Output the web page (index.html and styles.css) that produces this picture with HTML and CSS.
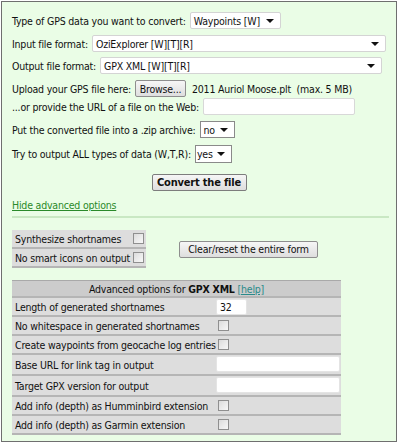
FILE: index.html
```html
<!DOCTYPE html>
<html>
<head>
<meta charset="utf-8">
<link rel="stylesheet" href="styles.css">
</head>
<body>
<div class="panel">
  <div class="row r1">
    <span class="lbl">Type of GPS data you want to convert:</span>
    <span class="sel w-type">Waypoints [W]<i class="arr"></i></span>
  </div>
  <div class="row r2">
    <span class="lbl">Input file format:</span>
    <span class="sel grow in-sel">OziExplorer [W][T][R]<i class="arr"></i></span>
  </div>
  <div class="row r3">
    <span class="lbl">Output file format:</span>
    <span class="sel grow out-sel">GPX XML [W][T][R]<i class="arr"></i></span>
  </div>
  <div class="row r4">
    <span class="lbl">Upload your GPS file here:</span>
    <span class="btn browse">Browse...</span>
    <span class="fname">2011 Auriol Moose.plt&nbsp; (max. 5 MB)</span>
  </div>
  <div class="row r5">
    <span class="lbl">...or provide the URL of a file on the Web:</span>
    <span class="inp url"></span>
  </div>
  <div class="row r6">
    <span class="lbl">Put the converted file into a .zip archive:</span>
    <span class="sel sq w-no">no<i class="arr"></i></span>
  </div>
  <div class="row r7">
    <span class="lbl">Try to output ALL types of data (W,T,R):</span>
    <span class="sel sq w-yes">yes<i class="arr"></i></span>
  </div>
  <div class="row center r8">
    <span class="btn convert">Convert the file</span>
  </div>
  <div class="row r9">
    <a class="link" href="#">Hide advanced options</a>
  </div>
  <div class="rule"></div>

  <div class="mid">
    <table class="opts small">
      <tr><td>Synthesize shortnames</td><td class="cb"><span class="chk"></span></td></tr>
      <tr><td>No smart icons on output</td><td class="cb"><span class="chk"></span></td></tr>
    </table>
    <span class="btn reset">Clear/reset the entire form</span>
  </div>

  <table class="opts adv">
    <colgroup><col class="k1"><col class="k2"></colgroup>
    <tr class="head"><td colspan="2">Advanced options for <b>GPX XML</b> <a class="help" href="#">[help]</a></td></tr>
    <tr><td class="c1">Length of generated shortnames</td><td class="c2"><span class="inp num">32</span></td></tr>
    <tr><td class="c1">No whitespace in generated shortnames</td><td class="c2"><span class="chk"></span></td></tr>
    <tr><td class="c1">Create waypoints from geocache log entries</td><td class="c2"><span class="chk"></span></td></tr>
    <tr class="tall"><td class="c1">Base URL for link tag in output</td><td class="c2"><span class="inp wide"></span></td></tr>
    <tr class="tall"><td class="c1">Target GPX version for output</td><td class="c2"><span class="inp wide"></span></td></tr>
    <tr><td class="c1">Add info (depth) as Humminbird extension</td><td class="c2"><span class="chk"></span></td></tr>
    <tr><td class="c1">Add info (depth) as Garmin extension</td><td class="c2"><span class="chk"></span></td></tr>
  </table>
</div>
</body>
</html>
```

FILE: styles.css
```css
html, body {
  margin: 0;
  padding: 0;
  background: #ffffff;
}
body {
  font-family: "DejaVu Sans Condensed", "DejaVu Sans", sans-serif;
  font-size: 10.5px;
  letter-spacing: -0.2px;
  color: #111;
}
.panel {
  margin: 1px;
  width: 396px;
  height: 441px;
  box-sizing: border-box;
  border: 1px solid #6f6f6f;
  background: #eafde6;
  padding: 10px 10px 0 10px;
}
.row {
  display: flex;
  align-items: center;
  height: 17px;
  white-space: nowrap;
}
.r2 { margin-top: 6px; }
.r3 { margin-top: 5px; }
.r4 { margin-top: 6px; }
.r5 { margin-top: 1px; }
.r6 { margin-top: 6px; }
.r7 { margin-top: 7px; height: 18px; }
.r8 { margin-top: 11px; }
.r9 { margin-top: 6px; height: 16px; }
.center { justify-content: center; }
.lbl { margin-right: 4px; }
.sel {
  position: relative;
  display: flex;
  align-items: center;
  height: 17px;
  box-sizing: border-box;
  background: #fff;
  border: 1px solid #d4d4d4;
  border-radius: 2px;
  padding: 0 18px 0 3px;
}
.sel.sq { border-color: #8a8a8a; border-radius: 0; height: 17px; }
.r7 .sel { height: 18px; }
.arr {
  position: absolute;
  right: 6px;
  top: 6px;
  width: 0;
  height: 0;
  border-left: 4px solid transparent;
  border-right: 4px solid transparent;
  border-top: 4px solid #111;
}
.w-type { padding-right: 20px; }
.grow { flex: 1; }
.in-sel { margin-right: 0; }
.out-sel { margin-right: 4px; }
.w-no { width: 35px; padding-left: 3px; }
.w-yes { width: 37px; padding-left: 1px; }
.btn {
  display: inline-flex;
  align-items: center;
  justify-content: center;
  height: 17px;
  box-sizing: border-box;
  border: 1px solid #8e8e8e;
  border-radius: 2px;
  background: linear-gradient(#f6f6f6, #dedede);
  color: #111;
}
.browse { width: 51px; margin-left: 0; margin-right: 6px; }
.inp {
  display: inline-flex;
  align-items: center;
  box-sizing: border-box;
  height: 17px;
  background: #fff;
  border: 1px solid #d8d8d8;
  border-radius: 2px;
}
.url { width: 152px; }
.convert { width: 95px; font-weight: bold; border-color: #7d7d7d; font-size: 11px; }
.link {
  color: #2a8a2a;
  text-decoration: underline;
}
.rule {
  margin-top: 3px;
  height: 2px;
  width: 377px;
  background: #c9e8c3;
}
.mid {
  margin-top: 12px;
  display: flex;
  align-items: center;
}
.opts {
  border-collapse: collapse;
  background: #dddddd;
}
.opts td {
  padding: 0 3px;
  height: 17px;
  border-bottom: 2px solid #b5b5b5;
  white-space: nowrap;
}
.small { width: 132px; }
.small td.cb { width: 12px; padding: 0 2px 0 0; }
.reset { width: 139px; margin-left: 33px; }
.chk {
  display: block;
  width: 11px;
  height: 11px;
  box-sizing: border-box;
  border: 1px solid #8f8f8f;
  background: linear-gradient(135deg, #dcdcdc, #f8f8f8);
}
.adv {
  margin-top: 12px;
  width: 329px;
  table-layout: fixed;
}
.adv col.k1 { width: 204px; }
.adv col.k2 { width: 125px; }
.adv tr.head td {
  height: 15px;
  background: #cccccc;
  text-align: center;
  border-top: 1px solid #a9a9a9;
}
.adv td.c1 { overflow: hidden; padding-right: 0; }
.adv td.c2 { padding: 0 2px 0 0; }
.adv tr.tall td { height: 19px; }
.help { color: #2a8a8a; text-decoration: underline; }
.num { width: 31px; height: 16px; padding-left: 3px; border-color: #e4e4e4; }
.adv .c2 .chk { margin-left: 2px; }
.wide { width: 124px; height: 16px; border-color: #e4e4e4; }
```
